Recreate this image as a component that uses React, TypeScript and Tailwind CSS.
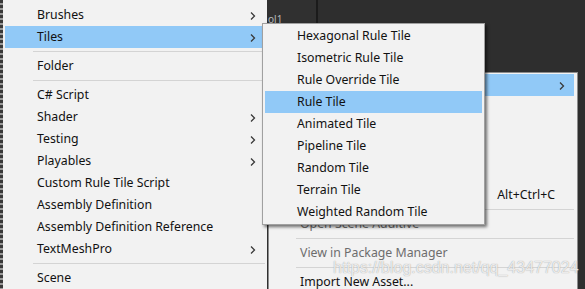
import React from 'react';

interface MenuItem {
  label?: string;
  sub?: boolean;
  active?: boolean;
  sep?: boolean;
  shortcut?: string;
  disabled?: boolean;
}

const assetsMenu: MenuItem[] = [
  { label: 'Brushes', sub: true },
  { label: 'Tiles', sub: true, active: true },
  { sep: true },
  { label: 'Folder' },
  { sep: true },
  { label: 'C# Script' },
  { label: 'Shader', sub: true },
  { label: 'Testing', sub: true },
  { label: 'Playables', sub: true },
  { label: 'Custom Rule Tile Script' },
  { label: 'Assembly Definition' },
  { label: 'Assembly Definition Reference' },
  { label: 'TextMeshPro', sub: true },
  { sep: true },
  { label: 'Scene' },
];

const tilesMenu: MenuItem[] = [
  { label: 'Hexagonal Rule Tile' },
  { label: 'Isometric Rule Tile' },
  { label: 'Rule Override Tile' },
  { label: 'Rule Tile', active: true },
  { label: 'Animated Tile' },
  { label: 'Pipeline Tile' },
  { label: 'Random Tile' },
  { label: 'Terrain Tile' },
  { label: 'Weighted Random Tile' },
];

// labels of the first rows sit under the Tiles submenu, only the shortcut shows
const rootMenu: MenuItem[] = [
  { sub: true, active: true },
  {},
  {},
  {},
  {},
  { shortcut: 'Alt+Ctrl+C' },
  { sep: true },
  { label: 'Open Scene Additive', disabled: true },
  { sep: true },
  { label: 'View in Package Manager', disabled: true },
  { sep: true },
  { label: 'Import New Asset...' },
];

const Chevron = () => (
  <svg width="6" height="10" viewBox="0 0 6 10" className="shrink-0">
    <path d="M1 1.5L4.5 5L1 8.5" fill="none" stroke="#3a3a3a" strokeWidth="1.3" />
  </svg>
);

const Row = ({ item, rowClass, sepClass }: { item: MenuItem; rowClass: string; sepClass: string }) => {
  if (item.sep) {
    return (
      <div className={`h-[7px] pt-[3px] ${sepClass}`}>
        <div className="h-px bg-[#d4d4d4]" />
      </div>
    );
  }
  return (
    <div
      className={`h-[22px] shrink-0 flex items-center pt-px ${rowClass} ${
        item.active ? 'bg-[#91c9f7]' : ''
      } ${item.disabled ? 'text-[#6d6d6d]' : 'text-[#111]'}`}
    >
      <span className="flex-1 whitespace-nowrap">{item.label}</span>
      {item.shortcut && <span className="mr-[10px] whitespace-nowrap">{item.shortcut}</span>}
      {item.sub && <Chevron />}
    </div>
  );
};

export default function App() {
  return (
    <div className="relative w-[585px] h-[289px] overflow-hidden font-['Noto_Sans',sans-serif] text-[12.3px] leading-none">
      {/* editor panels behind the menus */}
      <div className="flex h-full">
        <div className="w-[3px] bg-[repeating-linear-gradient(180deg,#3a3a3a_0px,#3a3a3a_3px,#9a9a9a_3px,#9a9a9a_5px)]" />
        <div className="w-[264px] bg-[#f2f2f2]" />
        <div className="w-[49px] bg-[#303030] relative">
          <span className="absolute left-[1px] top-[14px] text-[10px] text-[#b8b8b8]">ol1</span>
        </div>
        <div className="w-[2px] bg-[#1b1b1b]" />
        <div className="flex-1 bg-[#2e2e2e]" />
      </div>

      {/* Assets > Create menu */}
      <div className="absolute left-[3px] top-0 w-[264px] h-full bg-[#f2f2f2] pt-[4px] flex flex-col">
        {assetsMenu.map((item, i) => (
          <Row key={i} item={item} rowClass="ml-[2px] mr-[4px] pl-[32px] pr-[7px]" sepClass="ml-[30px] mr-[2px]" />
        ))}
      </div>

      {/* root context menu */}
      <div className="absolute left-[268px] top-[72px] w-[310px] h-[230px] bg-[#f2f2f2] border border-[#8c8c8c] pt-px flex flex-col">
        {rootMenu.map((item, i) => (
          <Row key={i} item={item} rowClass="ml-px mr-[3px] pl-[30px] pr-[9px]" sepClass="ml-[27px] mr-[3px]" />
        ))}
      </div>

      {/* Tiles submenu */}
      <div className="absolute left-[262px] top-[23px] w-[223px] bg-[#f2f2f2] border border-[#a0a0a0] py-px flex flex-col shadow-[2px_2px_3px_rgba(0,0,0,0.55)]">
        {tilesMenu.map((item, i) => (
          <Row key={i} item={item} rowClass="mx-[2px] pl-[32px] pr-[7px]" sepClass="mx-[2px]" />
        ))}
      </div>

      {/* watermark */}
      <div className="absolute left-[333px] top-[260px] font-['Liberation_Sans',sans-serif] text-[16px] text-white/80 [text-shadow:0_0_1px_#8a8a8a] whitespace-nowrap">
        https://blog.csdn.net/qq_43477024
      </div>
    </div>
  );
}
